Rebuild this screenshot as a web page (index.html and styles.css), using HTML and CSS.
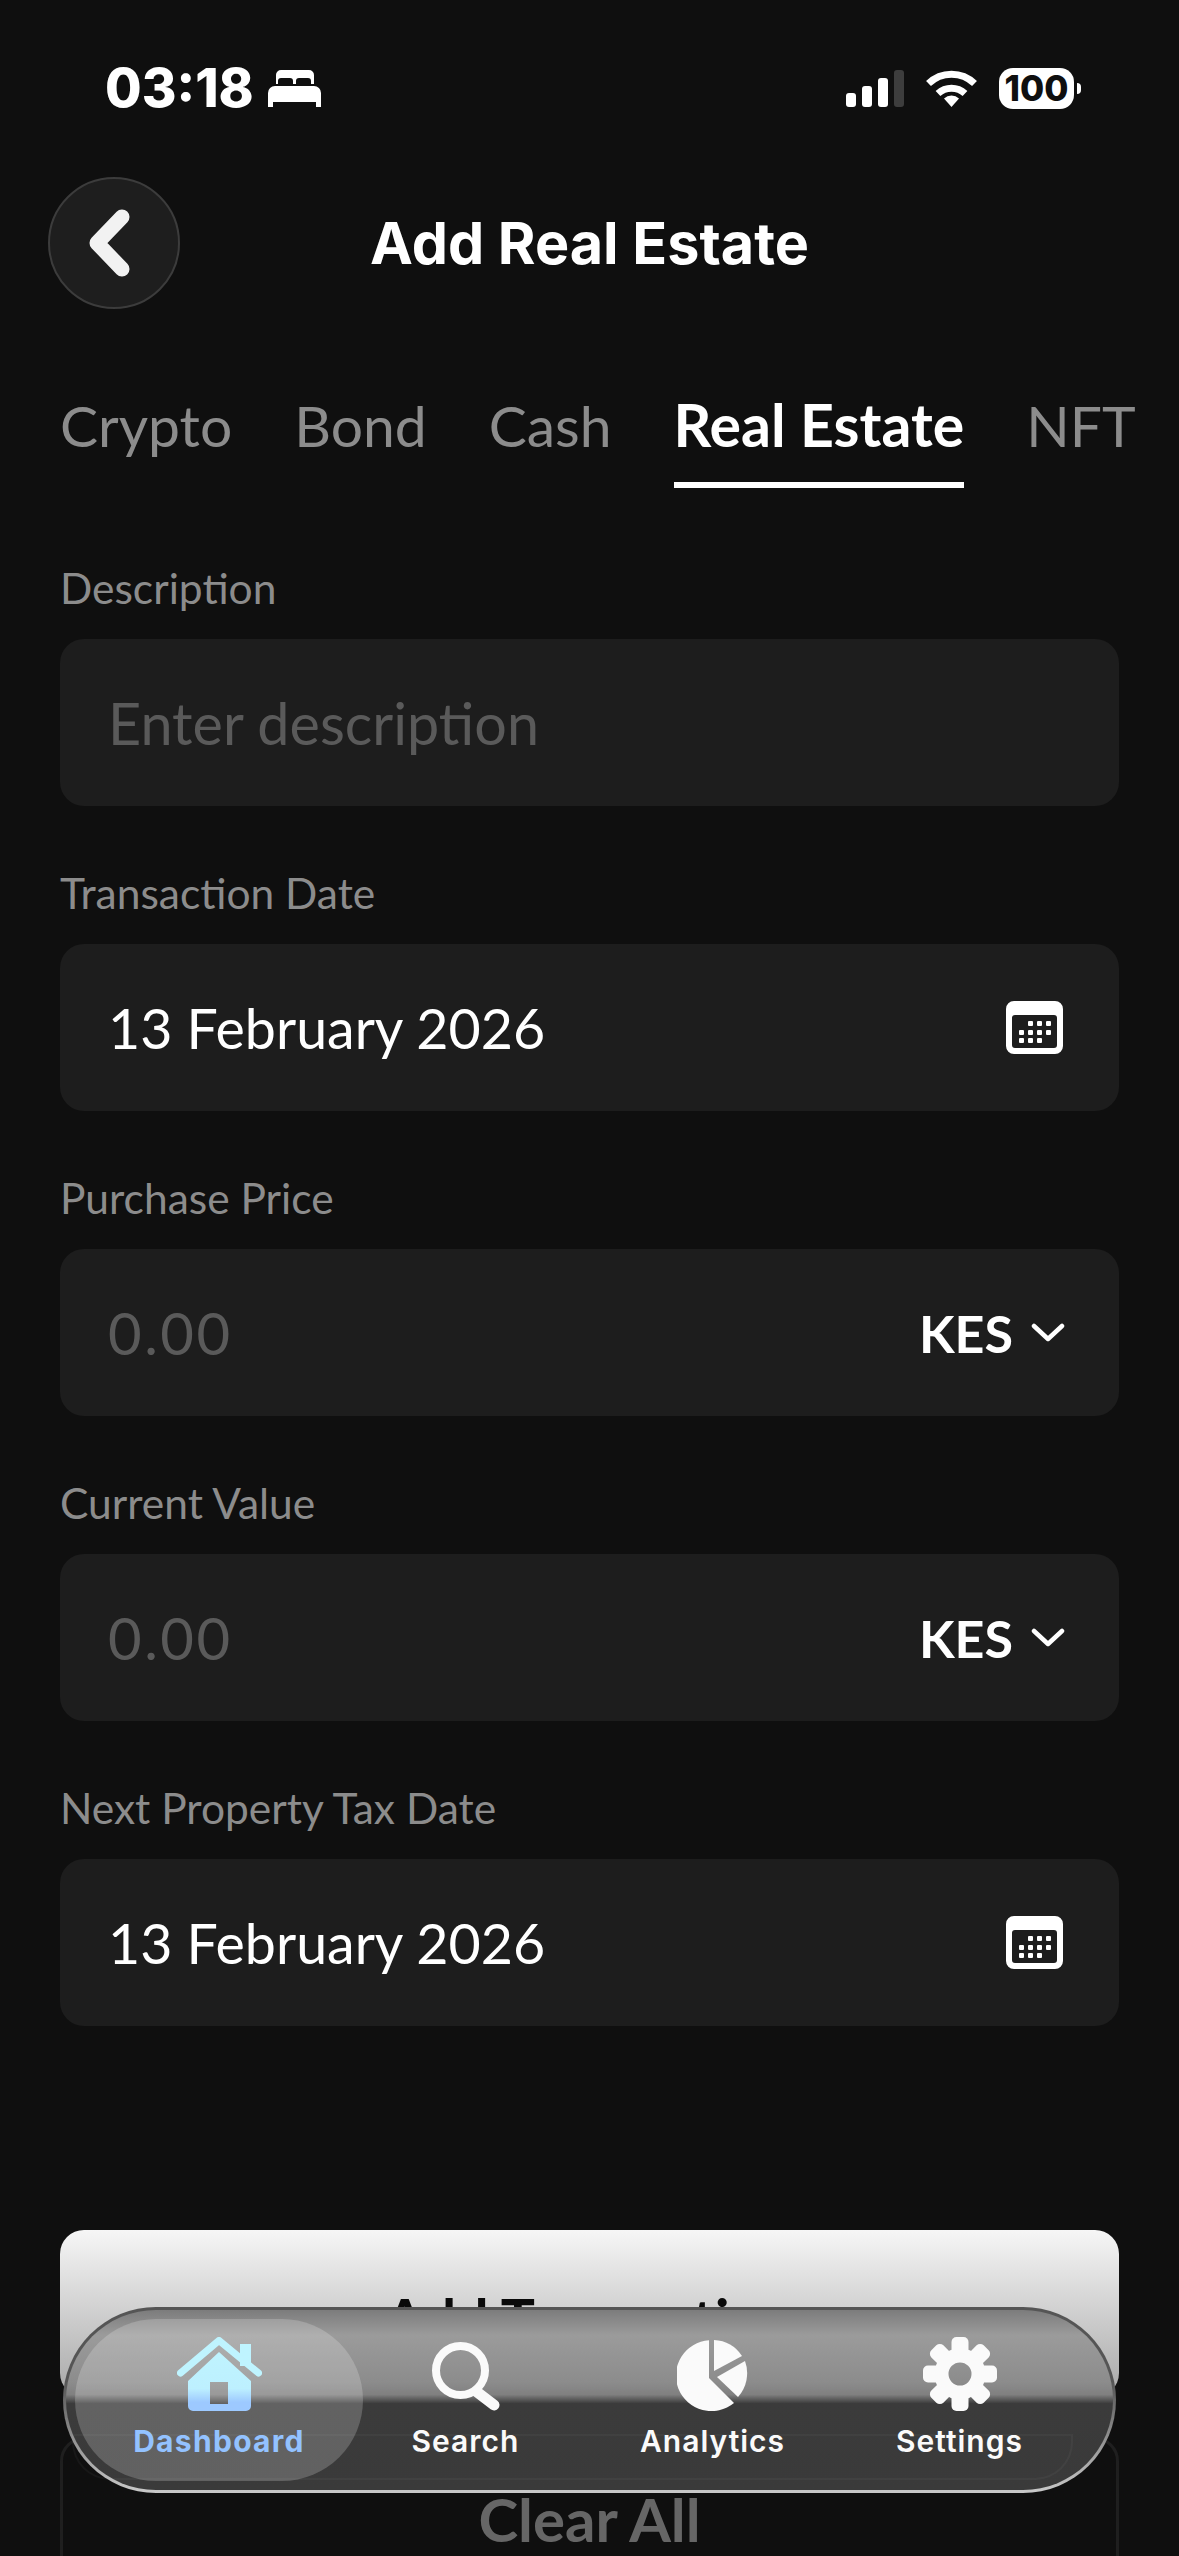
FILE: index.html
```html
<!DOCTYPE html>
<html lang="en">

<head>
    <meta charset="UTF-8">
    <meta name="viewport" content="width=device-width, initial-scale=1.0">
    <title>Add Real Estate</title>
    <link rel="stylesheet" href="styles.css">
</head>

<body>
    <div class="status-bar">
        <div class="status-left">
            <span class="clock">03:18</span>
            <svg class="bed" viewBox="0 0 53 37" width="53" height="37">
                <path fill="#fff" d="M13 0h28a5 5 0 0 1 5 5v9h-3V11a3 3 0 0 0-3-3h-9a3 3 0 0 0-3 3v3h-3v-3a3 3 0 0 0-3-3h-9a3 3 0 0 0-3 3v3H8V5a5 5 0 0 1 5-5z"/>
                <path fill="#fff" d="M7 16h39a7 7 0 0 1 7 7v14h-5v-5H5v5H0V23a7 7 0 0 1 7-7z"/>
            </svg>
        </div>
        <div class="status-right">
            <svg viewBox="0 0 58 37" width="58" height="37">
                <rect x="0" y="23" width="10" height="14" rx="3" fill="#fff"/>
                <rect x="16" y="16" width="10" height="21" rx="3" fill="#fff"/>
                <rect x="32" y="8" width="10" height="29" rx="3" fill="#fff"/>
                <rect x="48" y="0" width="10" height="37" rx="3" fill="#3d3d3d"/>
            </svg>
            <svg viewBox="0 0 51 37" width="51" height="37">
                <path fill="none" stroke="#fff" stroke-width="7" d="M2.5 13.5a33 33 0 0 1 46 0"/>
                <path fill="none" stroke="#fff" stroke-width="7" d="M12 23.5a20 20 0 0 1 27 0"/>
                <path fill="#fff" d="M18 28.5a11 11 0 0 1 15 0L25.5 37z"/>
            </svg>
            <div class="battery">
                <span class="battery-level">100</span>
                <span class="battery-nub"></span>
            </div>
        </div>
    </div>

    <header class="top-bar">
        <button class="back-btn">
            <svg viewBox="0 0 41 68" width="41" height="68">
                <polyline points="33,8 8,34 33,60" fill="none" stroke="#f2f2f2" stroke-width="15" stroke-linecap="round" stroke-linejoin="round"/>
            </svg>
        </button>
        <h1>Add Real Estate</h1>
    </header>

    <nav class="tabs">
        <a class="tab">Crypto</a>
        <a class="tab">Bond</a>
        <a class="tab">Cash</a>
        <a class="tab active">Real Estate</a>
        <a class="tab">NFT</a>
    </nav>

    <form class="form">
        <div class="field">
            <label>Description</label>
            <div class="box"><input type="text" placeholder="Enter description"></div>
        </div>
        <div class="field">
            <label>Transaction Date</label>
            <div class="box">
                <span class="value">13 February 2026</span>
                <svg class="cal" viewBox="0 0 57 53" width="57" height="53">
                    <use href="#cal-icon"/>
                </svg>
            </div>
        </div>
        <div class="field">
            <label>Purchase Price</label>
            <div class="box">
                <input class="amount" type="text" placeholder="0.00">
                <span class="currency">KES</span>
                <svg viewBox="0 0 34 19" width="34" height="19">
                    <use href="#chev-icon"/>
                </svg>
            </div>
        </div>
        <div class="field">
            <label>Current Value</label>
            <div class="box">
                <input class="amount" type="text" placeholder="0.00">
                <span class="currency">KES</span>
                <svg viewBox="0 0 34 19" width="34" height="19">
                    <use href="#chev-icon"/>
                </svg>
            </div>
        </div>
        <div class="field">
            <label>Next Property Tax Date</label>
            <div class="box">
                <span class="value">13 February 2026</span>
                <svg class="cal" viewBox="0 0 57 53" width="57" height="53">
                    <use href="#cal-icon"/>
                </svg>
            </div>
        </div>

        <button type="button" class="btn btn-add">Add Transaction</button>
        <button type="button" class="btn btn-clear">Clear All</button>
    </form>

    <div class="tab-bar">
        <div class="tab-bar-rim"></div>
        <a class="nav-item selected">
            <svg viewBox="0 0 85 74" width="85" height="74">
                <defs>
                    <linearGradient id="house-fill" x1="0" y1="0" x2="0" y2="1">
                        <stop offset="0" stop-color="#bff4ff"/>
                        <stop offset="0.62" stop-color="#bdf0ff"/>
                        <stop offset="0.85" stop-color="#9dc9ff"/>
                    </linearGradient>
                </defs>
                <path fill="url(#house-fill)" fill-rule="evenodd" d="M42 15 74 44v25a5 5 0 0 1-5 5H16a5 5 0 0 1-5-5V44zM33 45v22h18V45z"/>
                <rect x="63" y="7" width="11" height="22" fill="#bff4ff"/>
                <polyline points="3.5,36 42,3.5 81.5,36" fill="none" stroke="#bff4ff" stroke-width="7" stroke-linecap="round" stroke-linejoin="round"/>
            </svg>
            <span>Dashboard</span>
        </a>
        <a class="nav-item">
            <svg viewBox="0 0 68 69" width="68" height="69">
                <circle cx="28.5" cy="28.5" r="24.5" fill="none" stroke="#fafafa" stroke-width="8"/>
                <line x1="45" y1="50" x2="62" y2="63" stroke="#fafafa" stroke-width="11" stroke-linecap="round"/>
            </svg>
            <span>Search</span>
        </a>
        <a class="nav-item">
            <svg viewBox="0 0 71 71" width="71" height="71">
                <path fill="#fafafa" d="M32 0.2V38L57 63A35.5 35.5 0 1 1 32 0.2z"/>
                <path fill="#fafafa" d="M37 0A35.5 35.5 0 0 1 65 16L37 31z"/>
                <path fill="#fafafa" d="M40 37 68 21A35.5 35.5 0 0 1 61 57z"/>
            </svg>
            <span>Analytics</span>
        </a>
        <a class="nav-item">
            <svg viewBox="0 0 74 74" width="74" height="74">
                <circle cx="37" cy="37" r="18.5" fill="none" stroke="#fafafa" stroke-width="14"/>
                <g fill="#fafafa">
                    <rect x="28.5" y="0" width="17" height="18" rx="5"/>
                    <rect x="28.5" y="0" width="17" height="18" rx="5" transform="rotate(45 37 37)"/>
                    <rect x="28.5" y="0" width="17" height="18" rx="5" transform="rotate(90 37 37)"/>
                    <rect x="28.5" y="0" width="17" height="18" rx="5" transform="rotate(135 37 37)"/>
                    <rect x="28.5" y="0" width="17" height="18" rx="5" transform="rotate(180 37 37)"/>
                    <rect x="28.5" y="0" width="17" height="18" rx="5" transform="rotate(225 37 37)"/>
                    <rect x="28.5" y="0" width="17" height="18" rx="5" transform="rotate(270 37 37)"/>
                    <rect x="28.5" y="0" width="17" height="18" rx="5" transform="rotate(315 37 37)"/>
                </g>
            </svg>
            <span>Settings</span>
        </a>
    </div>

    <!-- shared icons -->
    <svg class="icon-defs" width="0" height="0">
        <symbol id="cal-icon" viewBox="0 0 57 53">
            <path fill="#fff" fill-rule="evenodd" d="M8 0h41a8 8 0 0 1 8 8v37a8 8 0 0 1-8 8H8a8 8 0 0 1-8-8V8a8 8 0 0 1 8-8zM9 14a3 3 0 0 0-3 3v27a3 3 0 0 0 3 3h39a3 3 0 0 0 3-3V17a3 3 0 0 0-3-3z"/>
            <g fill="#fff">
                <rect x="22" y="20" width="5" height="5" rx="1"/>
                <rect x="31" y="20" width="5" height="5" rx="1"/>
                <rect x="40" y="20" width="5" height="5" rx="1"/>
                <rect x="13" y="29" width="5" height="5" rx="1"/>
                <rect x="22" y="29" width="5" height="5" rx="1"/>
                <rect x="31" y="29" width="5" height="5" rx="1"/>
                <rect x="40" y="29" width="5" height="5" rx="1"/>
                <rect x="13" y="37" width="5" height="5" rx="1"/>
                <rect x="22" y="37" width="5" height="5" rx="1"/>
                <rect x="31" y="37" width="5" height="5" rx="1"/>
            </g>
        </symbol>
        <symbol id="chev-icon" viewBox="0 0 34 19">
            <polyline points="3,3 17,16 31,3" fill="none" stroke="#fff" stroke-width="4.5" stroke-linecap="round" stroke-linejoin="round"/>
        </symbol>
    </svg>
</body>

</html>
```

FILE: styles.css
```css
* {
    box-sizing: border-box;
}

body {
    font-family: 'Lato', sans-serif;
    background: #0f0f0f;
    color: #fff;
    margin: 0;
    padding-top: 48px;
    width: 1179px;
    height: 2556px;
    overflow: hidden;
    position: relative;
}

.status-bar {
    display: flex;
    justify-content: space-between;
    align-items: center;
    height: 80px;
    padding: 0 98px 0 105px;
}

.status-left {
    display: flex;
    align-items: center;
    gap: 14px;
}

.clock {
    font-family: 'Inter', sans-serif;
    font-weight: 800;
    font-size: 53px;
    line-height: 1;
}

.status-right {
    display: flex;
    align-items: center;
    gap: 22px;
}

.battery {
    display: flex;
    align-items: center;
    gap: 3px;
}

.battery-level {
    width: 75px;
    height: 41px;
    border-radius: 14px;
    background: #fff;
    color: #0f0f0f;
    font-family: 'Inter', sans-serif;
    font-weight: 800;
    font-size: 35px;
    line-height: 41px;
    text-align: center;
}

.battery-nub {
    width: 4px;
    height: 11px;
    border-radius: 0 4px 4px 0;
    background: #fff;
}

.top-bar {
    display: grid;
    grid-template-columns: 132px 1fr 132px;
    align-items: center;
    height: 132px;
    margin-top: 49px;
    padding: 0 48px;
}

.back-btn {
    display: flex;
    align-items: center;
    justify-content: center;
    width: 132px;
    height: 132px;
    padding: 0 10px 0 0;
    border-radius: 50%;
    border: 2px solid #3c3c3c;
    background: #1e1e1e;
}

.top-bar h1 {
    margin: 0;
    text-align: center;
    font-family: 'Inter', sans-serif;
    font-weight: 700;
    font-size: 57.5px;
}

.tabs {
    display: flex;
    gap: 62px;
    margin-top: 81px;
    padding-left: 60px;
    white-space: nowrap;
}

.tab {
    font-size: 57px;
    line-height: 70px;
    padding-bottom: 22px;
    border-bottom: 6px solid transparent;
    color: #8c8c8c;
}

.tab.active {
    color: #fff;
    font-size: 59px;
    font-weight: 700;
    border-bottom-color: #fff;
}

.form {
    display: flex;
    flex-direction: column;
    gap: 63px;
    margin-top: 76px;
    padding: 0 60px;
}

.field label {
    display: block;
    height: 48px;
    line-height: 48px;
    margin-bottom: 27px;
    font-size: 42.5px;
    color: #8c8c8c;
}

.box {
    display: flex;
    align-items: center;
    height: 167px;
    padding: 0 54px 0 48px;
    border-radius: 24px;
    background: #1d1d1d;
}

.box input {
    flex: 1;
    min-width: 0;
    padding: 0;
    border: 0;
    outline: 0;
    background: transparent;
    color: #fff;
    font-family: inherit;
    font-size: 57.5px;
}

.box input::placeholder {
    color: #5a5a5a;
    opacity: 1;
}

.box input.amount {
    font-size: 58px;
    letter-spacing: 2.5px;
}

.value {
    flex: 1;
    font-size: 55.5px;
}

.cal {
    margin-right: 2px;
}

.currency {
    margin-right: 18px;
    font-weight: 700;
    font-size: 52px;
}

.btn {
    display: block;
    width: 100%;
    height: 167px;
    border-radius: 24px;
    font-family: inherit;
    font-weight: 700;
}

.btn-add {
    margin-top: 141px;
    padding: 10px 0 0;
    border: 0;
    background: linear-gradient(#f6f6f6, #a8a8a8);
    color: #0a0a0a;
    font-size: 57px;
}

.btn-clear {
    margin-top: -23px;
    padding: 0 0 4px;
    border: 3px solid #1f1f1f;
    background: transparent;
    color: #666;
    font-size: 60px;
}

/* floating glass bar sits over the buttons */
.tab-bar {
    position: absolute;
    left: 63px;
    top: 2307px;
    display: grid;
    grid-template-columns: repeat(4, 247px);
    align-items: stretch;
    width: 1053px;
    height: 186px;
    padding: 9px 29px;
    border: 3px solid transparent;
    border-radius: 93px;
    background:
        linear-gradient(#7c7c7c 0, #9b9b9b 14%, #8c8c8c 40%, #808080 47%, #3b3b3b 52%, #3a3a3a 100%) padding-box,
        linear-gradient(#555 0, #555 40%, #c9c9c9 100%) border-box;
}

.tab-bar-rim {
    position: absolute;
    left: 6px;
    right: 40px;
    top: 124px;
    height: 46px;
    border: 2px solid rgba(255, 255, 255, 0.04);
    border-top-color: rgba(255, 255, 255, 0.03);
    border-radius: 0 0 38px 38px;
    pointer-events: none;
}

.nav-item {
    position: relative;
    display: flex;
    flex-direction: column;
    align-items: center;
    justify-content: flex-end;
    height: 162px;
    padding-bottom: 22px;
    gap: 12px;
    font-family: 'Inter', sans-serif;
    font-weight: 600;
    font-size: 30px;
    line-height: 36px;
    letter-spacing: 1px;
    color: #fafafa;
}

.nav-item.selected {
    margin: 0 -21px 0 -20px;
    border-radius: 81px;
    background: rgba(255, 255, 255, 0.2);
    color: #93c2ff;
    font-weight: 700;
    letter-spacing: 1.3px;
}

.icon-defs {
    position: absolute;
}
```
